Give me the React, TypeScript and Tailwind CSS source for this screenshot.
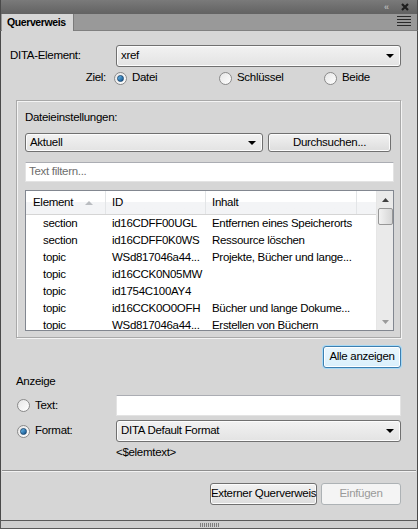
import React from 'react';

const rows = [
  { el: 'section', id: 'id16CDFF00UGL', txt: 'Entfernen eines Speicherorts' },
  { el: 'section', id: 'id16CDFF0K0WS', txt: 'Ressource löschen' },
  { el: 'topic', id: 'WSd817046a44...', txt: 'Projekte, Bücher und lange...' },
  { el: 'topic', id: 'id16CCK0N05MW', txt: '' },
  { el: 'topic', id: 'id1754C100AY4', txt: '' },
  { el: 'topic', id: 'id16CCK0O0OFH', txt: 'Bücher und lange Dokume...' },
  { el: 'topic', id: 'WSd817046a44...', txt: 'Erstellen von Büchern' },
];

const Radio = ({ checked }: { checked?: boolean }) => (
  <span className="w-[13px] h-[13px] rounded-full border border-[#8a8a8a] bg-gradient-to-br from-[#e6e6e6] to-[#ffffff] flex items-center justify-center shrink-0">
    {checked && <span className="w-[7px] h-[7px] rounded-full bg-gradient-to-br from-[#6ec0f0] to-[#0b4f8a] border border-[#1d4a73]" />}
  </span>
);

const Arrow = () => (
  <svg width="8" height="4" viewBox="0 0 8 4" className="shrink-0">
    <path d="M0 0 H8 L4 4 Z" fill="#000" />
  </svg>
);

const Select = ({ value, className }: { value: string; className: string }) => (
  <div className={`flex items-center justify-between pl-[4px] pr-[6px] border border-[#707070] rounded-[3px] bg-gradient-to-b from-[#f2f2f2] to-[#e3e3e3] shadow-[inset_0_0_0_1px_#fcfcfc] ${className}`}>
    <span>{value}</span>
    <Arrow />
  </div>
);

const Button = ({ label, className, disabled, focus }: { label: string; className: string; disabled?: boolean; focus?: boolean }) => (
  <div
    className={`flex items-center justify-center whitespace-nowrap rounded-[3px] border ${
      disabled
        ? 'border-[#adb2b5] bg-[#f4f4f4] text-[#9a9a9a]'
        : focus
          ? 'border-[#3c7fb1] bg-gradient-to-b from-[#eaf6fd] to-[#d9f0fc] shadow-[0_0_0_1px_#a7d9f5,inset_0_0_0_1px_#ffffff]'
          : 'border-[#707070] bg-gradient-to-b from-[#f2f2f2] to-[#dddddd] shadow-[inset_0_0_0_1px_#fcfcfc]'
    } ${className}`}
  >
    {label}
  </div>
);

export default function App() {
  return (
    <div className="w-[418px] h-[529px] flex flex-col bg-[#d6d6d6] text-[11.5px] tracking-[-0.3px] text-black font-['Liberation_Sans',Arial,sans-serif] overflow-hidden">
      {/* title strip */}
      <div className="h-[14px] shrink-0 bg-gradient-to-b from-[#7a7a7a] to-[#626262] border-x border-[#4a4a4a] flex items-center justify-end pr-[8px] gap-[13px]">
        <span className="text-[9px] leading-none text-[#b4b4b4] font-bold tracking-[-1px]">‹‹</span>
        <svg width="8" height="8" viewBox="0 0 8 8">
          <path d="M1 1 L7 7 M7 1 L1 7" stroke="#1e1e1e" strokeWidth="2.2" />
        </svg>
      </div>
      {/* tab row */}
      <div className="h-[17px] shrink-0 bg-[#999999] border-x border-[#4a4a4a] border-b border-b-[#808080] flex items-end">
        <div className="h-[17px] w-[72px] ml-[1px] bg-[#d6d6d6] border-r border-[#7a7a7a] flex items-center pl-[5px] text-[10.5px] font-bold leading-none -mb-px tracking-[-0.4px] whitespace-nowrap">
          Querverweis
        </div>
        <div className="flex-1" />
        <div className="flex flex-col gap-[2px] mr-[6px] mb-[4px]">
          <span className="block w-[14px] h-px bg-[#2a2a2a]" />
          <span className="block w-[14px] h-px bg-[#2a2a2a]" />
          <span className="block w-[14px] h-px bg-[#2a2a2a]" />
          <span className="block w-[14px] h-px bg-[#2a2a2a]" />
        </div>
      </div>

      {/* body */}
      <div className="flex-1 flex flex-col border-x border-[#4a4a4a] min-h-0">
        <div className="flex items-center mt-[14px] pl-[9px]">
          <span className="w-[106px]">DITA-Element:</span>
          <Select value="xref" className="w-[285px] h-[22px]" />
        </div>
        <div className="flex items-center h-[18px] mt-[2px]">
          <span className="w-[106px] text-right pr-[1px]">Ziel:</span>
          <div className="flex items-center gap-[5px] ml-[7px] w-[105px]">
            <Radio checked />
            <span>Datei</span>
          </div>
          <div className="flex items-center gap-[5px] w-[105px]">
            <Radio />
            <span>Schlüssel</span>
          </div>
          <div className="flex items-center gap-[5px]">
            <Radio />
            <span>Beide</span>
          </div>
        </div>

        {/* group box */}
        <div className="mx-[15px] mt-[13px] w-[385px] h-[238px] border border-[#a9a9a9] shadow-[inset_1px_1px_0_#f4f4f4,1px_1px_0_#f4f4f4] px-[8px] pt-[8px]">
          <div className="h-[16px] leading-[16px]">Dateieinstellungen:</div>
          <div className="flex mt-[8px] gap-[5px]">
            <Select value="Aktuell" className="w-[238px] h-[19px]" />
            <Button label="Durchsuchen..." className="w-[123px] h-[19px]" />
          </div>
          <div className="mt-[10px] w-[369px] h-[20px] bg-white border border-[#e3e3e3] border-t-[#abadb3] flex items-center pl-[3px] text-[#6d6d6d]">
            Text filtern...
          </div>
          <div className="mt-[8px] w-[369px] h-[141px] bg-white border border-[#828790] flex overflow-hidden">
            <div className="flex-1 flex flex-col min-w-0">
              <div className="h-[24px] shrink-0 flex bg-gradient-to-b from-[#ffffff] from-50% to-[#f3f4f6] to-50% border-b border-[#d5d5d5]">
                <div className="w-[80px] flex items-center pl-[7px] border-r border-[#e3e5e7]">
                  <span>Element</span>
                  <svg width="8" height="4" viewBox="0 0 8 4" className="ml-[12px]">
                    <path d="M0 4 H8 L4 0 Z" fill="#b9bcc0" />
                  </svg>
                </div>
                <div className="w-[100px] flex items-center pl-[6px] border-r border-[#e3e5e7]">ID</div>
                <div className="w-[151px] flex items-center pl-[6px] border-r border-[#e3e5e7]">Inhalt</div>
                <div className="flex-1" />
              </div>
              {rows.map((r, i) => (
                <div key={i} className="h-[17px] shrink-0 flex items-center leading-none whitespace-nowrap">
                  <span className="w-[80px] pl-[17px]">{r.el}</span>
                  <span className="w-[100px] pl-[6px]">{r.id}</span>
                  <span className="pl-[6px]">{r.txt}</span>
                </div>
              ))}
            </div>
            <div className="w-[17px] shrink-0 bg-[#eaeaea] flex flex-col items-center border-l border-[#e6e6e6]">
              <div className="h-[17px] flex items-center">
                <svg width="7" height="4" viewBox="0 0 7 4"><path d="M0 4 H7 L3.5 0 Z" fill="#404040" /></svg>
              </div>
              <div className="w-[15px] h-[17px] rounded-[2px] border border-[#979797] bg-gradient-to-r from-[#f2f2f2] to-[#d6d6d6]" />
              <div className="flex-1" />
              <div className="h-[17px] flex items-center">
                <svg width="7" height="4" viewBox="0 0 7 4"><path d="M0 0 H7 L3.5 4 Z" fill="#9a9a9a" /></svg>
              </div>
            </div>
          </div>
        </div>

        <div className="flex justify-end mt-[8px] pr-[16px]">
          <Button label="Alle anzeigen" focus className="w-[78px] h-[22px]" />
        </div>

        <div className="pl-[15px] mt-[4px] h-[18px] leading-[18px]">Anzeige</div>
        <div className="flex items-center mt-[5px] pl-[16px]">
          <div className="w-[99px] flex items-center gap-[5px]">
            <Radio />
            <span>Text:</span>
          </div>
          <div className="w-[285px] h-[21px] bg-white border border-[#e3e3e3] border-t-[#abadb3]" />
        </div>
        <div className="flex items-center mt-[4px] pl-[16px]">
          <div className="w-[99px] flex items-center gap-[5px]">
            <Radio checked />
            <span>Format:</span>
          </div>
          <Select value="DITA Default Format" className="w-[285px] h-[22px]" />
        </div>
        <div className="pl-[115px] mt-[2px] h-[16px] leading-[16px]">&lt;$elemtext&gt;</div>

        <div className="mt-[10px] mx-px h-[2px] border-t border-[#8e8e8e] border-b border-b-[#f2f2f2]" />

        <div className="flex justify-end gap-[4px] pr-[16px] mt-[11px]">
          <Button label="Externer Querverweis" className="w-[107px] h-[22px]" />
          <Button label="Einfügen" disabled className="w-[80px] h-[22px]" />
        </div>
        <div className="flex-1" />
      </div>

      {/* bottom bar */}
      <div className="h-[9px] shrink-0 bg-[#cfcfcf] border border-[#5a5a5a] flex items-center justify-center">
        <div className="flex gap-px">
          {Array.from({ length: 10 }).map((_, i) => (
            <span key={i} className="block w-px h-[4px] bg-[#7d7d7d]" />
          ))}
        </div>
      </div>
    </div>
  );
}
